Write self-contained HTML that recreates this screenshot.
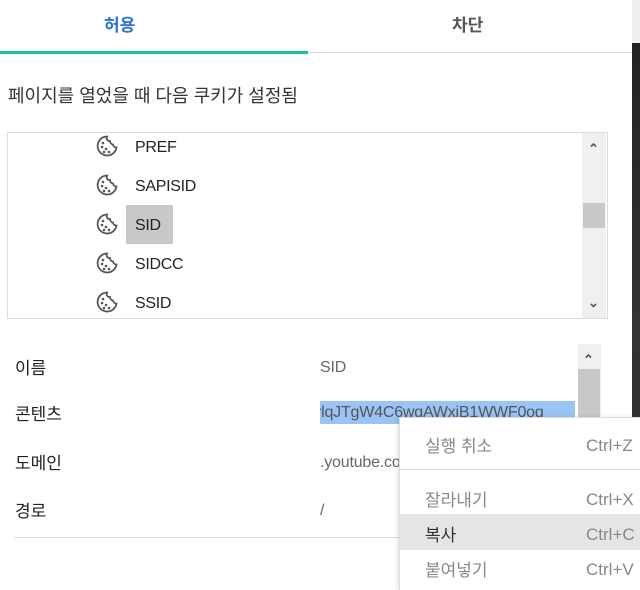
<!DOCTYPE html>
<html><head><meta charset="utf-8"><style>
body{margin:0;width:640px;height:589px;overflow:hidden;background:#fff;font-family:"Liberation Sans","Noto Sans CJK KR",sans-serif;color:#333;position:relative}
.a{position:absolute;white-space:nowrap;line-height:20px}
.tab{font-size:17px;font-weight:bold;top:16px}
.row{font-size:17px;color:#222}
.ck{position:absolute;left:95px;width:24px;height:24px}
.li{position:absolute;left:135px;font-size:16px;color:#222;letter-spacing:-0.3px}
.m{font-size:17px;color:#888}
.v{font-size:16px;color:#666;letter-spacing:-0.2px}
</style></head><body>
<div class="a" style="left:632px;top:43px;width:8px;height:546px;background:linear-gradient(#222,#333 50%,#2a3030)"></div>
<div class="a" style="left:632px;top:0;width:8px;height:43px;background:#eee"></div>
<div class="a tab" style="left:104px;color:#2a74d8">허용</div>
<div class="a tab" style="left:452px;color:#555">차단</div>
<div class="a" style="left:0;top:52px;width:632px;height:1px;background:#ddd"></div>
<div class="a" style="left:0;top:51px;width:308px;height:3px;background:#1cbfa5"></div>
<div class="a" style="left:8px;top:86px;font-size:18px;color:#333">페이지를 열었을 때 다음 쿠키가 설정됨</div>
<div class="a" style="left:7px;top:132px;width:601px;height:187px;border:1px solid #ddd;box-sizing:border-box;overflow:hidden">
<div class="a" style="left:574px;top:0;width:24px;height:185px;background:#f0f0f0"></div>
<div class="a" style="left:575px;top:70px;width:22px;height:25px;background:#c8c8c8"></div>
<div class="a" style="left:580px;top:6px;font-size:13px;color:#555;font-weight:bold">&#8963;</div>
<div class="a" style="left:580px;top:160px;font-size:13px;color:#555;font-weight:bold">&#8964;</div>
<div class="a" style="left:118px;top:72px;width:47px;height:39px;background:#c8c8c8"></div>
</div>
<svg width="0" height="0" style="position:absolute"><defs><g id="c" fill="none" stroke="#555" stroke-width="1.8"><path d="M12 2.5A9.5 9.5 0 1 0 21.5 13.5a3.5 3.5 0 0 1-3.5-3 3.5 3.5 0 0 1-3-3.5 3 3 0 0 1-3-4.5z"/><g fill="#555" stroke="none"><circle cx="8" cy="9" r="1.3"/><circle cx="7" cy="13" r="1.3"/><circle cx="11" cy="15" r="1.3"/><circle cx="9" cy="18" r="1.3"/><circle cx="14" cy="18" r="1.3"/></g></g></defs></svg>
<svg class="ck" style="top:134px" viewBox="0 0 24 24"><use href="#c"/></svg><div class="a li" style="top:138px">PREF</div>
<svg class="ck" style="top:173px" viewBox="0 0 24 24"><use href="#c"/></svg><div class="a li" style="top:177px">SAPISID</div>
<svg class="ck" style="top:212px" viewBox="0 0 24 24"><use href="#c"/></svg><div class="a li" style="top:216px">SID</div>
<svg class="ck" style="top:251px" viewBox="0 0 24 24"><use href="#c"/></svg><div class="a li" style="top:255px">SIDCC</div>
<svg class="ck" style="top:290px" viewBox="0 0 24 24"><use href="#c"/></svg><div class="a li" style="top:294px">SSID</div>
<div class="a row" style="left:15px;top:359px">이름</div>
<div class="a row" style="left:15px;top:405px">콘텐츠</div>
<div class="a row" style="left:15px;top:454px">도메인</div>
<div class="a row" style="left:15px;top:502px">경로</div>
<div class="a v" style="left:320px;top:358px">SID</div>
<div class="a" style="left:320px;top:401px;width:255px;height:23px;background:#99c4f5;overflow:hidden"><span style="position:absolute;left:-4px;top:2px;font-size:16px;color:#555;letter-spacing:-0.2px">rlqJTgW4C6wgAWxiB1WWF0og</span></div>
<div class="a v" style="left:320px;top:453px">.youtube.com</div>
<div class="a v" style="left:320px;top:501px">/</div>
<div class="a" style="left:578px;top:344px;width:23px;height:90px;background:#f0f0f0"></div>
<div class="a" style="left:578px;top:369px;width:22px;height:65px;background:#c8c8c8"></div>
<div class="a" style="left:583px;top:350px;font-size:13px;color:#555;font-weight:bold">&#8963;</div>
<div class="a" style="left:14px;top:537px;width:400px;height:1px;background:#ddd"></div>
<div class="a" style="left:399px;top:417px;width:241px;height:172px;background:#fff;border-left:1px solid #ddd;border-top:1px solid #ddd;box-shadow:-2px 0 4px rgba(0,0,0,.1)">
<div class="a m" style="left:25px;top:19px">실행 취소</div><div class="a m" style="left:186px;top:18px">Ctrl+Z</div>
<div class="a" style="left:0;top:51px;width:241px;height:1px;background:#ddd"></div>
<div class="a m" style="left:25px;top:73px">잘라내기</div><div class="a m" style="left:186px;top:72px">Ctrl+X</div>
<div class="a" style="left:0;top:96px;width:241px;height:36px;background:#e5e5e5"></div>
<div class="a m" style="left:25px;top:108px;color:#333">복사</div><div class="a m" style="left:186px;top:107px">Ctrl+C</div>
<div class="a m" style="left:25px;top:143px">붙여넣기</div><div class="a m" style="left:186px;top:142px">Ctrl+V</div>
</div>
</body></html>
